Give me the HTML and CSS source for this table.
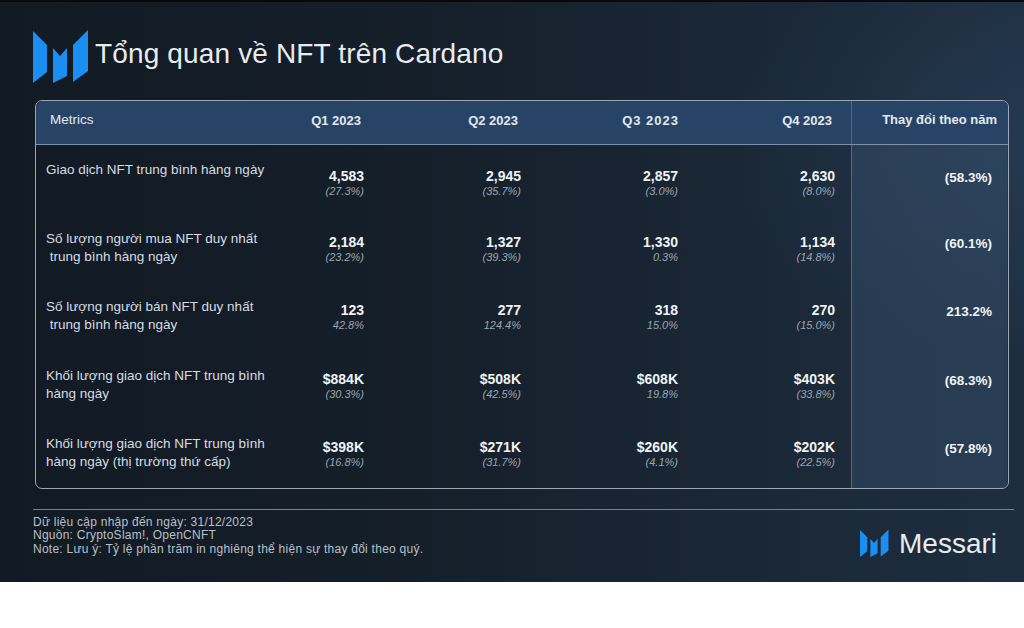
FILE: index.html
```html
<!DOCTYPE html>
<html lang="vi">
<head>
<meta charset="utf-8">
<title>Tổng quan về NFT trên Cardano</title>
<link rel="stylesheet" href="styles.css">
</head>
<body>
<div class="slide">
  <header class="title-row">
    <svg class="logo" viewBox="0 0 56 56" aria-hidden="true">
      <polygon points="0,2 14,16 14,43 0,54"/>
      <polygon points="20,19 27,27 34,19 34,47 20,54"/>
      <polygon points="40,16 55,1 55,42 40,53"/>
    </svg>
    <h1 class="title">Tổng quan về NFT trên Cardano</h1>
  </header>

  <div class="table">
    <div class="row head">
      <div class="cell metric">Metrics</div>
      <div class="cell q">Q1 2023</div>
      <div class="cell q">Q2 2023</div>
      <div class="cell q spaced">Q3 2023</div>
      <div class="cell q">Q4 2023</div>
      <div class="cell yoy">Thay đổi theo năm</div>
    </div>

    <div class="row body first">
      <div class="cell metric">Giao dịch NFT trung bình hàng ngày</div>
      <div class="cell val"><b>4,583</b><i>(27.3%)</i></div>
      <div class="cell val"><b>2,945</b><i>(35.7%)</i></div>
      <div class="cell val"><b>2,857</b><i>(3.0%)</i></div>
      <div class="cell val"><b>2,630</b><i>(8.0%)</i></div>
      <div class="cell yoy"><b>(58.3%)</b></div>
    </div>

    <div class="row body">
      <div class="cell metric">Số lượng người mua NFT duy nhất<br>&nbsp;trung bình hàng ngày</div>
      <div class="cell val"><b>2,184</b><i>(23.2%)</i></div>
      <div class="cell val"><b>1,327</b><i>(39.3%)</i></div>
      <div class="cell val"><b>1,330</b><i>0.3%</i></div>
      <div class="cell val"><b>1,134</b><i>(14.8%)</i></div>
      <div class="cell yoy"><b>(60.1%)</b></div>
    </div>

    <div class="row body">
      <div class="cell metric">Số lượng người bán NFT duy nhất<br>&nbsp;trung bình hàng ngày</div>
      <div class="cell val"><b>123</b><i>42.8%</i></div>
      <div class="cell val"><b>277</b><i>124.4%</i></div>
      <div class="cell val"><b>318</b><i>15.0%</i></div>
      <div class="cell val"><b>270</b><i>(15.0%)</i></div>
      <div class="cell yoy"><b>213.2%</b></div>
    </div>

    <div class="row body">
      <div class="cell metric">Khối lượng giao dịch NFT trung bình<br>hàng ngày</div>
      <div class="cell val"><b>$884K</b><i>(30.3%)</i></div>
      <div class="cell val"><b>$508K</b><i>(42.5%)</i></div>
      <div class="cell val"><b>$608K</b><i>19.8%</i></div>
      <div class="cell val"><b>$403K</b><i>(33.8%)</i></div>
      <div class="cell yoy"><b>(68.3%)</b></div>
    </div>

    <div class="row body">
      <div class="cell metric">Khối lượng giao dịch NFT trung bình<br>hàng ngày (thị trường thứ cấp)</div>
      <div class="cell val"><b>$398K</b><i>(16.8%)</i></div>
      <div class="cell val"><b>$271K</b><i>(31.7%)</i></div>
      <div class="cell val"><b>$260K</b><i>(4.1%)</i></div>
      <div class="cell val"><b>$202K</b><i>(22.5%)</i></div>
      <div class="cell yoy"><b>(57.8%)</b></div>
    </div>
  </div>

  <footer class="foot">
    <div class="notes">
      <p>Dữ liệu cập nhập đến ngày: 31/12/2023</p>
      <p>Nguồn: CryptoSlam!, OpenCNFT</p>
      <p>Note: Lưu ý: Tỷ lệ phần trăm in nghiêng thể hiện sự thay đổi theo quý.</p>
    </div>
    <div class="brand">
      <svg class="brand-logo" viewBox="0 0 56 56" aria-hidden="true">
        <polygon points="0,2 14,16 14,43 0,54"/>
        <polygon points="20,19 27,27 34,19 34,47 20,54"/>
        <polygon points="40,16 55,1 55,42 40,53"/>
      </svg>
      <span class="brand-name">Messari</span>
    </div>
  </footer>
</div>
</body>
</html>
```

FILE: styles.css
```css
* { box-sizing: border-box; }

html, body {
  margin: 0;
  padding: 0;
  background: #ffffff;
}

body {
  width: 1024px;
  height: 628px;
  font-family: "Liberation Sans", Arial, sans-serif;
  color: #e6eaee;
}

.slide {
  height: 582px;
  border-top: 2px solid #06090d;
  padding: 27px 10px 0 33px;
  background:
    radial-gradient(ellipse 420px 300px at 100% 25%, rgba(48, 78, 110, 0.35), rgba(48, 78, 110, 0) 70%),
    linear-gradient(90deg, #121a23 0%, #151f2a 40%, #1a2735 72%, #1e2e40 100%);
  display: flex;
  flex-direction: column;
}

/* Title */
.title-row {
  display: flex;
  align-items: flex-start;
  gap: 6px;
  height: 56px;
}

.logo {
  width: 56px;
  height: 56px;
  fill: #1b8ef2;
  flex: none;
}

.title {
  margin: 9px 0 0;
  font-size: 28px;
  line-height: 32px;
  font-weight: normal;
  color: #e8ecef;
  letter-spacing: 0.15px;
}

/* Table */
.table {
  margin: 15px 0 0 2px;
  width: 974px;
  border: 1px solid #9aa6b4;
  border-radius: 7px;
  overflow: hidden;
  display: flex;
  flex-direction: column;
}

.row {
  display: grid;
  grid-template-columns: 234px 110px 157px 157px 157px 156px;
}

.head {
  height: 44px;
  background: #274466;
  border-bottom: 1px solid #7d90a6;
}

.head .cell {
  padding-top: 12px;
  font-size: 13px;
  line-height: 16px;
  font-weight: bold;
  color: #e3e8ee;
  text-align: right;
  padding-right: 19px;
}

.head .metric {
  text-align: left;
  font-weight: normal;
  font-size: 13.5px;
  padding-left: 14px;
  padding-top: 11px;
}

.head .spaced {
  letter-spacing: 1px;
  padding-right: 15px;
}

.head .yoy {
  padding-right: 10px;
  padding-top: 11px;
}

.body {
  height: 68.6px;
}

.cell {
  min-width: 0;
}

.body .metric {
  padding: 16px 0 0 10px;
  font-size: 13.5px;
  line-height: 18px;
  color: #d6dce2;
  white-space: nowrap;
}

.val {
  padding: 20px 16px 0 0;
  display: flex;
  flex-direction: column;
  align-items: flex-end;
}

.first .val,
.first .yoy {
  padding-top: 23px;
}

.val b {
  font-size: 14px;
  line-height: 16px;
  font-weight: bold;
  color: #f0f3f5;
}

.val i {
  font-size: 11px;
  line-height: 14px;
  font-style: italic;
  color: #9ba5b0;
}

.yoy {
  border-left: 1px solid #56697f;
}

.body .yoy {
  background: rgba(58, 84, 112, 0.42);
  padding: 20px 15px 0 0;
  text-align: right;
}

.body.first .yoy {
  padding-top: 23px;
}

.body .yoy b {
  font-size: 13.5px;
  line-height: 16px;
  color: #f0f3f5;
}

/* Footer */
.foot {
  margin-top: 20px;
  border-top: 1px solid #6f8299;
  display: flex;
  justify-content: space-between;
  align-items: flex-start;
  padding-right: 17px;
}

.notes {
  padding-top: 6px;
}

.notes p {
  margin: 0;
  font-size: 12px;
  line-height: 13.5px;
  letter-spacing: 0.25px;
  color: #b7c0c9;
}

.brand {
  margin-top: 18px;
  display: flex;
  align-items: center;
  gap: 10px;
}

.brand-logo {
  width: 29px;
  height: 29px;
  fill: #1b8ef2;
}

.brand-name {
  font-size: 28px;
  line-height: 32px;
  color: #e8ecef;
}
```
